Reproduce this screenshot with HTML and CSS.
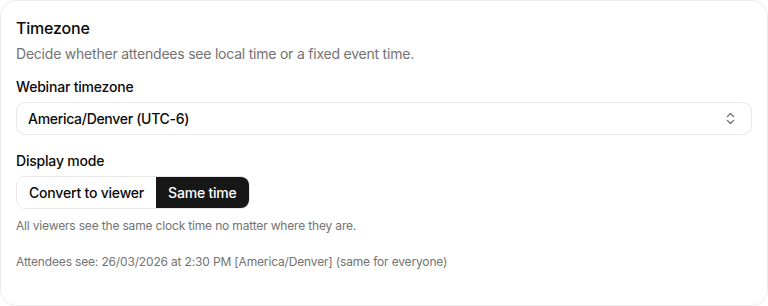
FILE: index.html
```html
<!DOCTYPE html>
<html lang="en">
<head>
<meta charset="utf-8">
<link rel="stylesheet" href="styles.css">
</head>
<body>
<section class="card">
  <h2 class="title">Timezone</h2>
  <p class="desc">Decide whether attendees see local time or a fixed event time.</p>
  <div class="field">
    <label class="label">Webinar timezone</label>
    <div class="select">
      <span>America/Denver (UTC-6)</span>
      <svg class="chev" width="15" height="15" viewBox="0 0 24 24" fill="none" stroke="#666" stroke-width="1.8" stroke-linecap="round" stroke-linejoin="round"><path d="m7 15 5 5 5-5"/><path d="m7 9 5-5 5 5"/></svg>
    </div>
  </div>
  <div class="field mode">
    <label class="label">Display mode</label>
    <div class="seg">
      <button class="seg-btn">Convert to viewer</button>
      <button class="seg-btn active">Same time</button>
    </div>
    <p class="hint">All viewers see the same clock time no matter where they are.</p>
  </div>
  <p class="preview">Attendees see: 26/03/2026 at 2:30 PM [America/Denver] (same for everyone)</p>
</section>
</body>
</html>
```
FILE: styles.css
```css
* { box-sizing: border-box; }
html, body { margin: 0; padding: 0; background: #fff; }
body {
  font-family: Inter, "Liberation Sans", sans-serif;
  color: #0a0a0a;
  width: 768px;
  height: 306px;
  overflow: hidden;
}
.card {
  width: 768px;
  height: 306px;
  border: 1px solid #ececec;
  border-radius: 16px;
  padding: 16px 15px;
  display: flex;
  flex-direction: column;
}
.title {
  margin: 0;
  font-size: 16px;
  font-weight: 500;
  line-height: 22px;
  letter-spacing: -0.2px;
}
.desc {
  margin: 5px 0 0;
  font-size: 14px;
  line-height: 20px;
  color: #737373;
  letter-spacing: -0.22px;
}
.field { display: flex; flex-direction: column; }
.desc + .field { margin-top: 13px; }
.label {
  font-size: 14px;
  font-weight: 500;
  line-height: 20px;
  margin-bottom: 5px;
  letter-spacing: -0.2px;
}
.select {
  height: 33px;
  border: 1px solid #e8e8e8;
  border-radius: 9px;
  display: flex;
  align-items: center;
  justify-content: space-between;
  padding: 0 13px 0 11px;
  font-size: 14px;
  font-weight: 500;
  letter-spacing: -0.3px;
}
.chev { display: block; }
.mode { margin-top: 16px; }
.seg {
  display: flex;
  align-self: flex-start;
  height: 33px;
  border: 1px solid #e8e8e8;
  border-radius: 9px;
  overflow: hidden;
}
.seg-btn {
  border: 0;
  background: #fff;
  font-family: inherit;
  font-size: 14px;
  font-weight: 500;
  letter-spacing: -0.2px;
  color: #0a0a0a;
  padding: 0 12px;
  margin: 0;
}
.seg-btn.active {
  background: #171717;
  color: #fff;
}
.hint {
  margin: 9px 0 0;
  font-size: 12px;
  line-height: 16px;
  color: #737373;
  letter-spacing: -0.17px;
}
.preview {
  margin: 20px 0 0;
  font-size: 12px;
  line-height: 16px;
  color: #737373;
  letter-spacing: -0.16px;
}
```
